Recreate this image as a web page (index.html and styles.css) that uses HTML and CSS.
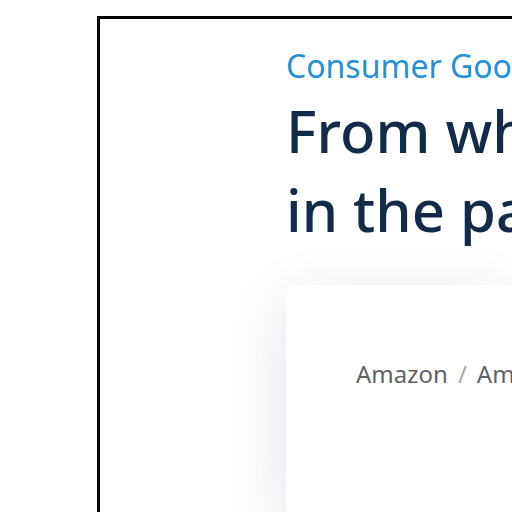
FILE: index.html
```html
<!DOCTYPE html>
<html lang="en">
<head>
<meta charset="utf-8">
<title>Consumer Goods</title>
<link rel="stylesheet" href="styles.css">
</head>
<body>
<main class="frame">
  <header class="intro">
    <p class="category">Consumer Goo</p>
    <h1 class="title"><span>From wh</span><span>in the pa</span></h1>
  </header>
  <section class="card">
    <nav class="crumbs" aria-label="Breadcrumb">
      <a href="#">Amazon</a><span class="sep">/</span><a href="#">Am</a>
    </nav>
  </section>
</main>
</body>
</html>
```
FILE: styles.css
```css
* { box-sizing: border-box; }
body {
  display: flex;
  min-height: 100vh;
  margin: 0;
  padding: 16px 0 0 97px;
  background: #fff;
  font-family: "Noto Sans", "Open Sans", sans-serif;
}
.frame {
  display: flex;
  flex: 1;
  flex-direction: column;
  min-width: 0;
  padding: 27px 0 0 186px;
  border: solid #000;
  border-width: 3px 0 0 3px;
  overflow: hidden;
  white-space: nowrap;
}
.category {
  margin: 0;
  color: #2490d8;
  font-size: 32px;
  font-weight: 400;
  line-height: 40px;
}
.title {
  margin: 5px 0 0;
  color: #122b48;
  font-size: 58px;
  font-weight: 500;
  line-height: 79px;
}
.title span { display: block; }
.card {
  flex: 1;
  margin-top: 36px;
  padding: 71px 70px 0;
  border-radius: 10px 0 0 0;
  background: #fff;
  box-shadow: 0 16px 60px rgba(30, 50, 120, 0.13);
}
.crumbs {
  display: flex;
  gap: 10px;
  font-size: 24px;
  line-height: 36px;
}
.crumbs a { color: #626262; text-decoration: none; }
.sep { color: #aaa; }
```
